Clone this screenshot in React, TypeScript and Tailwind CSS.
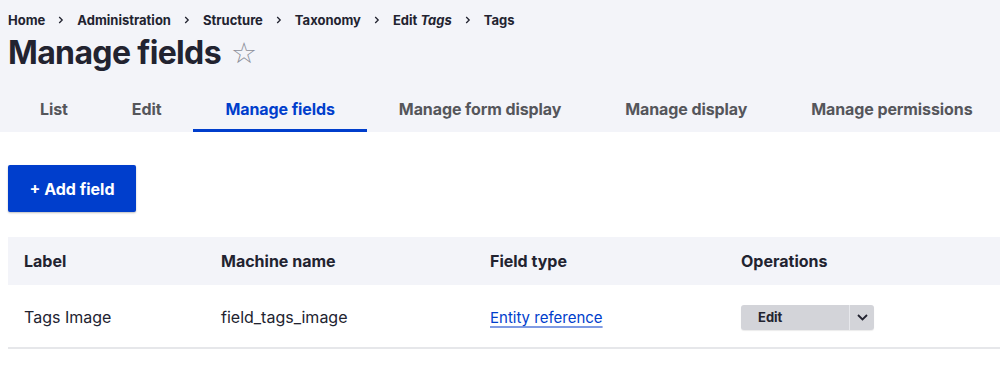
import React from "react";

const crumbs = ["Home", "Administration", "Structure", "Taxonomy"];

function Sep() {
  return (
    <span className="mx-[13px] inline-flex items-center text-[#222330]">
      <svg width="6" height="8" viewBox="0 0 6 8" fill="none">
        <path d="M1.2 1 L4.2 4 L1.2 7" stroke="currentColor" strokeWidth="1.3" />
      </svg>
    </span>
  );
}

const tabs = ["List", "Edit", "Manage fields", "Manage form display", "Manage display", "Manage permissions"];

export default function App() {
  return (
    <div
      className="w-[1000px] h-[377px] overflow-hidden bg-white text-[#222330]"
      style={{ fontFamily: "Inter, 'Noto Sans', sans-serif" }}
    >
      <div className="bg-[#f3f4f9] pl-2">
        <div className="pt-[12px] flex items-center text-[13px] font-bold leading-4 whitespace-nowrap">
          {crumbs.map((c) => (
            <React.Fragment key={c}>
              <span>{c}</span>
              <Sep />
            </React.Fragment>
          ))}
          <span>
            Edit <em>Tags</em>
          </span>
          <Sep />
          <span>Tags</span>
        </div>
        <div className="mt-[8px] flex items-center h-[34px]">
          <h1 className="text-[32px] font-bold tracking-[-0.02em] leading-none">Manage fields</h1>
          <span className="ml-[10px] text-[29px] leading-none text-[#8c8f99] font-normal" style={{ fontFamily: "'DejaVu Sans', sans-serif" }}>
            ☆
          </span>
        </div>
        <div className="mt-[17px] flex whitespace-nowrap">
          {tabs.map((t) => {
            const active = t === "Manage fields";
            return (
              <div
                key={t}
                className={
                  "px-8 h-[45px] flex items-center text-[16px] font-bold tracking-[-0.006em] border-b-[3px] pt-[2px] " +
                  (active ? "text-[#003ecc] border-[#003ecc]" : "text-[#55565b] border-transparent")
                }
              >
                {t}
              </div>
            );
          })}
        </div>
      </div>

      <div className="pl-2 pt-[33px]">
        <button className="w-[128px] h-[47px] rounded-[2px] bg-[#003ecc] text-white text-[16px] font-bold shadow-[0_1px_2px_rgba(0,0,0,0.25)] flex items-center justify-center">
          + Add field
        </button>

        <table className="mt-[25px] w-[1100px] border-collapse text-left">
          <thead>
            <tr className="bg-[#f3f4f9] h-[48px] text-[16px] font-bold">
              <th className="w-[197px] pl-4 font-bold">Label</th>
              <th className="w-[269px] pl-4 font-bold">Machine name</th>
              <th className="w-[251px] pl-4 font-bold">Field type</th>
              <th className="pl-4 font-bold">Operations</th>
            </tr>
          </thead>
          <tbody>
            <tr className="h-[63px] text-[16px] border-b-2 border-[#e6e7ea]">
              <td className="pl-4 pt-[2px]">Tags Image</td>
              <td className="pl-4 pt-[2px]">field_tags_image</td>
              <td className="pl-4 pt-[2px]">
                <a
                  href="#"
                  className="text-[15px] text-[#003ecc] underline decoration-[#7f9be3] underline-offset-[3px] decoration-[1.5px]"
                >
                  Entity reference
                </a>
              </td>
              <td className="pl-4 pt-[2px]">
                <div className="inline-flex h-[25px] rounded-[3px] bg-[#d3d4d9] shadow-[0_1px_1px_rgba(0,0,0,0.08)]">
                  <span className="w-[108px] pl-[17px] flex items-center text-[13px] font-bold">Edit</span>
                  <span className="w-[1px] bg-[#e7e8ec]" />
                  <span className="w-[24px] flex items-center justify-center">
                    <svg width="11" height="7" viewBox="0 0 11 7" fill="none">
                      <path d="M1 1 L5.5 5.5 L10 1" stroke="#222330" strokeWidth="1.8" />
                    </svg>
                  </span>
                </div>
              </td>
            </tr>
          </tbody>
        </table>
      </div>
    </div>
  );
}
